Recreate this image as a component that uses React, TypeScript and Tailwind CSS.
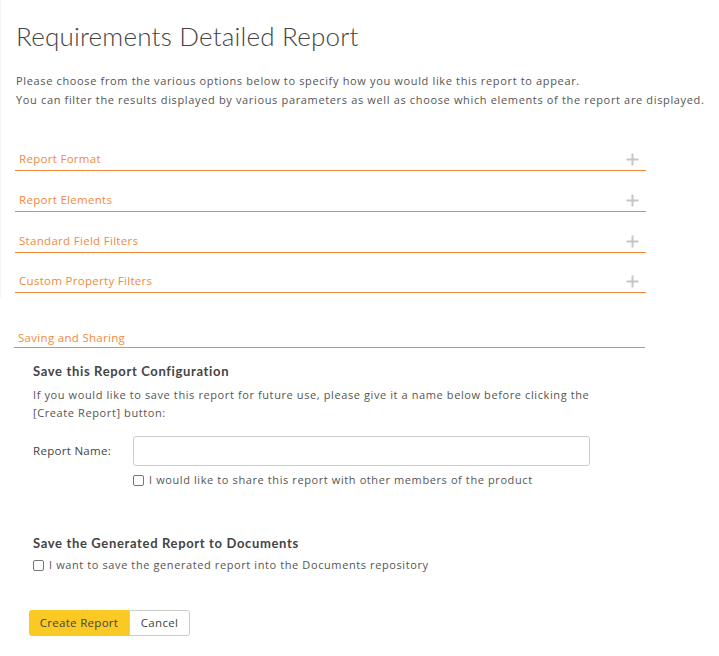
import React from "react";

const body = { fontFamily: '"Open Sans", "Liberation Sans", sans-serif' };
const head = { fontFamily: 'Lato, "Open Sans", sans-serif' };

function Plus() {
  return (
    <svg width="13" height="13" viewBox="0 0 13 13" className="mr-[7px] mb-[1px]">
      <path d="M6.5 0.5V12.5M0.5 6.5H12.5" stroke="#c6c6c6" strokeWidth="2" />
    </svg>
  );
}

function Section({ title, plus = true, mt = "", pb = "pb-[3px]" }: { title: string; plus?: boolean; mt?: string; pb?: string }) {
  return (
    <div
      className={`w-[631px] -ml-[1px] h-[41px] flex items-end justify-between ${pb} pl-[4px] border-b border-[#f4893a] ${mt}`}
    >
      <span className="text-[11.5px] leading-[16px] text-[#f4893a] tracking-[0.3px]" style={body}>
        {title}
      </span>
      {plus && <Plus />}
    </div>
  );
}

function Box() {
  return <span className="inline-block w-[11px] h-[11px] border border-[#777] rounded-[2px] bg-white shrink-0" />;
}

export default function App() {
  return (
    <div className="w-[719px] h-[656px] bg-white overflow-hidden text-[#555]" style={body}>
      <div className="pl-[15px] border-l border-[#f3f3f3] h-[298px]">
        <h1 className="pt-[20px] text-[26px] leading-[32px] font-light text-[#444] tracking-[0.2px]" style={head}>
          Requirements Detailed Report
        </h1>
        <div className="mt-[19px] text-[11px] leading-[19px] text-[#555] tracking-[0.65px] whitespace-nowrap">
          <div>Please choose from the various options below to specify how you would like this report to appear.</div>
          <div>You can filter the results displayed by various parameters as well as choose which elements of the report are displayed.</div>
        </div>
        <div className="mt-[21px]">
          <Section title="Report Format" />
          <Section title="Report Elements" />
          <Section title="Standard Field Filters" />
          <Section title="Custom Property Filters" mt="-mt-[1px]" />
        </div>
      </div>
      <div className="pl-[15px]">
        <Section title="Saving and Sharing" plus={false} mt="mt-[9px]" pb="pb-[1px]" />
        <div className="pl-[18px]">
          <h2 className="mt-[14px] text-[13px] leading-[18px] font-bold text-[#444] tracking-[0.65px]" style={head}>
            Save this Report Configuration
          </h2>
          <p className="mt-[6px] w-[580px] text-[11px] leading-[18px] tracking-[0.6px]">
            If you would like to save this report for future use, please give it a name below before clicking the [Create Report] button:
          </p>
          <div className="mt-[14px] flex items-center">
            <span className="w-[100px] text-[11.5px] text-[#444] tracking-[0.3px]">Report Name:</span>
            <input className="w-[457px] h-[30px] border border-[#ccc] rounded-[3px] outline-none" />
          </div>
          <label className="mt-[7px] ml-[100px] flex items-center gap-[5px] text-[11px] leading-[14px] tracking-[0.6px]">
            <Box />
            <span>I would like to share this report with other members of the product</span>
          </label>
          <h2 className="mt-[47px] text-[13px] leading-[18px] font-bold text-[#444] tracking-[0.65px]" style={head}>
            Save the Generated Report to Documents
          </h2>
          <label className="mt-[6px] flex items-center gap-[5px] text-[11px] leading-[14px] tracking-[0.6px]">
            <Box />
            <span>I want to save the generated report into the Documents repository</span>
          </label>
          <div className="mt-[38px] -ml-[4px] flex">
            <button className="h-[26px] w-[100px] bg-[#fac923] rounded-l-[3px] text-[11.5px] text-[#444] tracking-[0.3px]">
              Create Report
            </button>
            <button className="h-[26px] w-[61px] bg-white border border-[#ccc] rounded-r-[3px] text-[11.5px] text-[#444] tracking-[0.3px]">
              Cancel
            </button>
          </div>
        </div>
      </div>
    </div>
  );
}
